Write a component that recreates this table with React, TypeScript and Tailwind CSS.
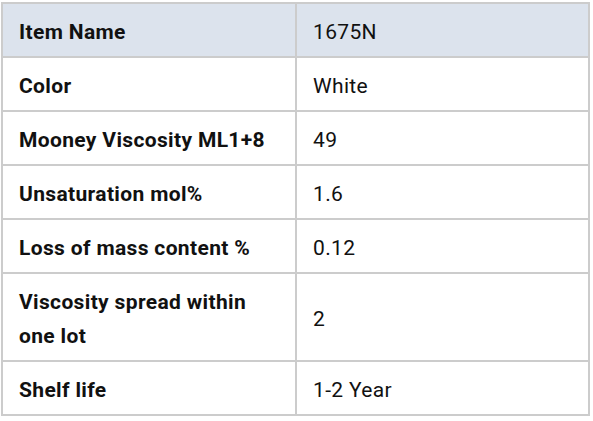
const rows: [string, string][] = [
  ['Color', 'White'],
  ['Mooney Viscosity ML1+8', '49'],
  ['Unsaturation mol%', '1.6'],
  ['Loss of mass content %', '0.12'],
  ['Viscosity spread within one lot', '2'],
  ['Shelf life', '1-2 Year'],
];

export default function App() {
  return (
    <div className="min-h-[421px] w-[593px] bg-white pl-px pt-[2px] font-['Roboto',sans-serif] text-[21px] leading-[34px] tracking-[0.35px] text-[#111111]">
      <table className="w-[589px] table-fixed border-collapse border-2 border-[#cccccc]">
        <colgroup>
          <col className="w-[294px]" />
          <col />
        </colgroup>
        <tbody>
          <tr className="bg-[#dce3ed]">
            <td className="border-2 border-[#cccccc] px-4 pt-[11px] pb-[7px] font-bold">Item Name</td>
            <td className="border-2 border-[#cccccc] px-4 pt-[11px] pb-[7px]">1675N</td>
          </tr>
          {rows.map(([label, value]) => (
            <tr key={label}>
              <td className="border-2 border-[#cccccc] px-4 pt-[11px] pb-[7px] font-bold">{label}</td>
              <td className="border-2 border-[#cccccc] px-4 pt-[11px] pb-[7px]">{value}</td>
            </tr>
          ))}
        </tbody>
      </table>
    </div>
  );
}
